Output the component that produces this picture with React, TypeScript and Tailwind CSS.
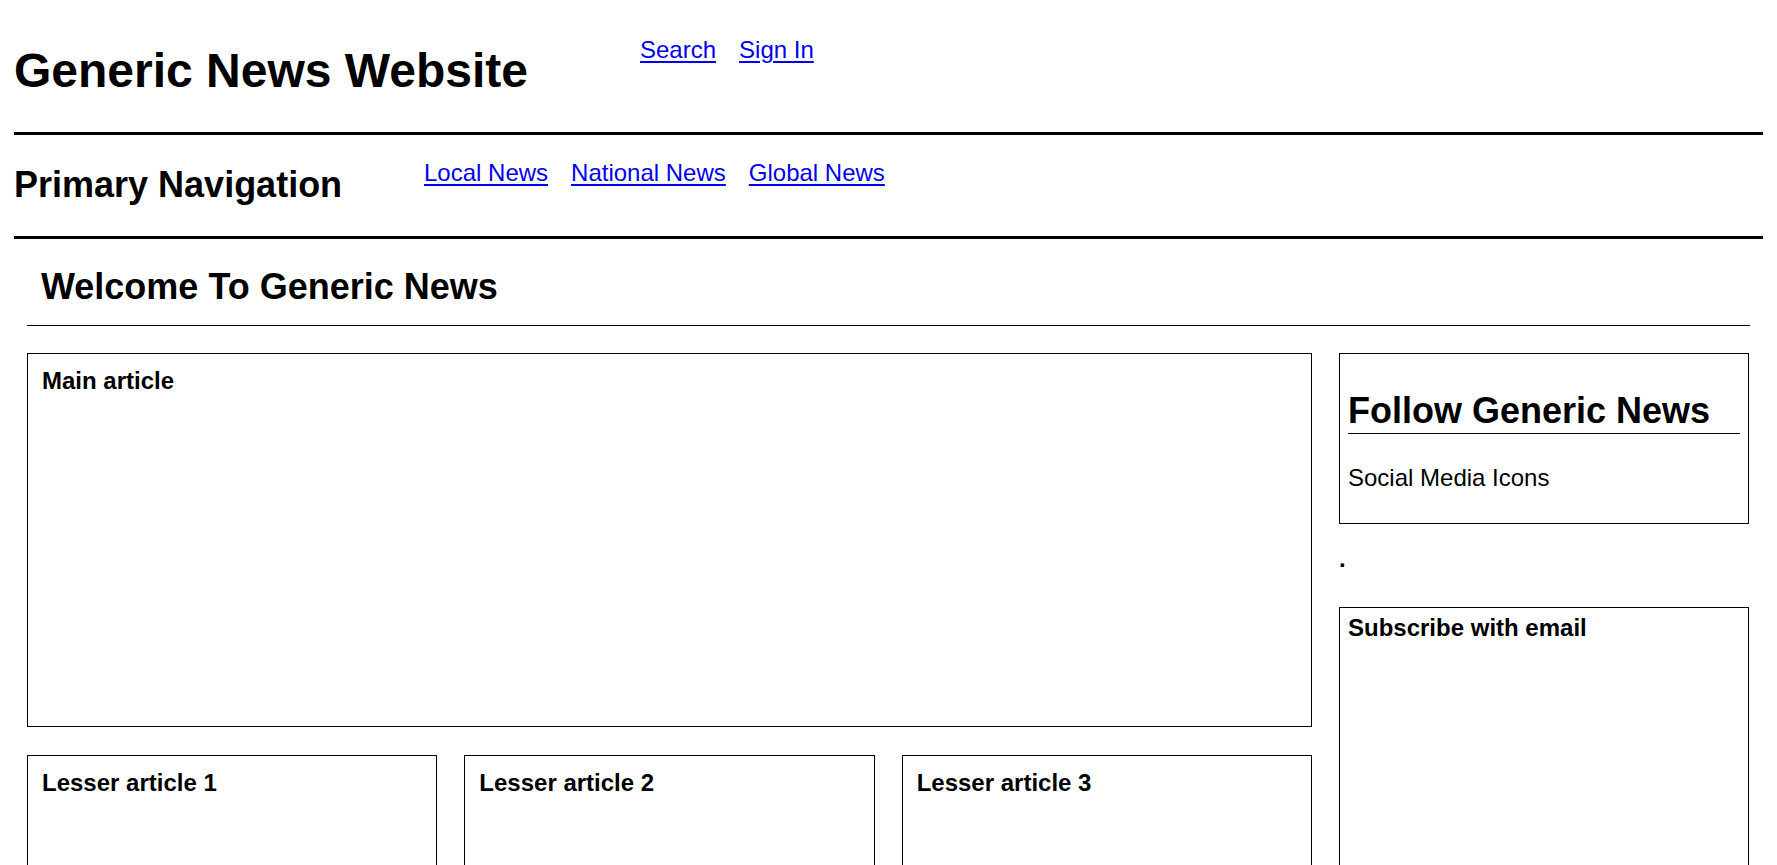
export default function App() {
  const sans = "font-['Liberation_Sans',Arial,sans-serif]";
  const link = "text-[#0000ee] underline underline-offset-[3px]";

  return (
    <div className={`${sans} min-h-screen bg-white px-[12px] text-black`}>
      <header className="flex h-[132px] items-start">
        <h1 className="mt-[43px] w-[628px] pl-[2px] text-[48px] font-bold leading-[55px]">
          Generic News Website
        </h1>
        <div className="mt-[36px] flex gap-[23px] text-[24px] leading-[28px]">
          <a href="#" className={link}>
            Search
          </a>
          <a href="#" className={link}>
            Sign In
          </a>
        </div>
      </header>
      <div className="mx-[2px] border-t-[3px] border-black" />

      <nav className="flex h-[101px] items-start">
        <h2 className="mt-[29px] w-[412px] pl-[2px] text-[36px] font-bold leading-[41px]">
          Primary Navigation
        </h2>
        <div className="mt-[24px] flex gap-[23px] text-[24px] leading-[28px]">
          <a href="#" className={link}>
            Local News
          </a>
          <a href="#" className={link}>
            National News
          </a>
          <a href="#" className={link}>
            Global News
          </a>
        </div>
      </nav>
      <div className="mx-[2px] border-t-[3px] border-black" />

      <main className="mx-[15px]">
        <h2 className="mt-[27px] pl-[14px] text-[36px] font-bold leading-[41px]">
          Welcome To Generic News
        </h2>
        <div className="mt-[18px] border-t border-black" />

        <div className="mt-[27px] flex gap-[27px]">
          <div className="w-[1285px]">
            <section className="h-[374px] border border-black pl-[14px] pr-[12px] pt-[13px]">
              <h4 className="text-[24px] font-bold leading-[28px]">Main article</h4>
            </section>
            <div className="mt-[28px] grid grid-cols-3 gap-[27px]">
              {[1, 2, 3].map((n) => (
                <section key={n} className="h-[300px] border border-black pl-[14px] pr-[12px] pt-[13px]">
                  <h4 className="text-[24px] font-bold leading-[28px]">Lesser article {n}</h4>
                </section>
              ))}
            </div>
          </div>

          <aside className="w-[410px]">
            <section className="border border-black p-[8px]">
              <h2 className="mt-[28px] border-b border-black pb-[2px] text-[36px] font-bold leading-[41px]">
                Follow Generic News
              </h2>
              <p className="mb-[23px] mt-[30px] text-[24px] leading-[28px]">Social Media Icons</p>
            </section>
            <p className="mt-[21px] text-[24px] font-bold leading-[28px]">.</p>
            <section className="mt-[34px] h-[400px] border border-black px-[8px] pt-[6px]">
              <h4 className="text-[24px] font-bold leading-[28px]">Subscribe with email</h4>
            </section>
          </aside>
        </div>
      </main>
    </div>
  );
}
